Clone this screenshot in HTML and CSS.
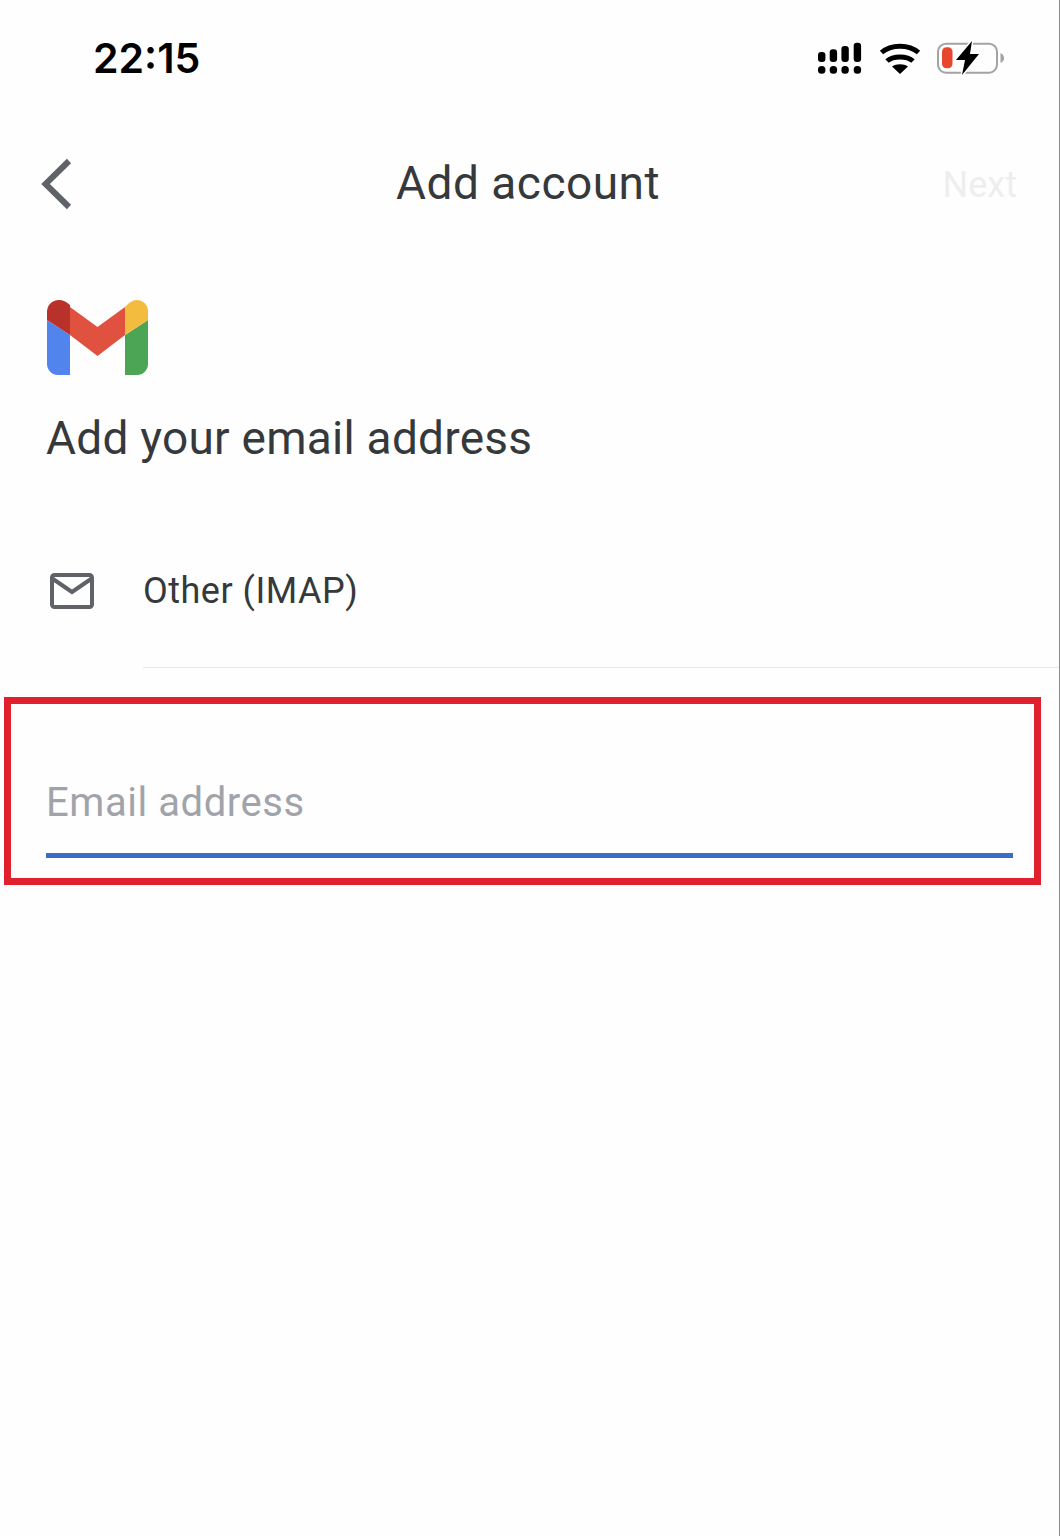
FILE: index.html
```html
<!DOCTYPE html>
<html>
<head>
    <meta name="viewport" content="width=device-width, initial-scale=1.0">
    <title>Add account</title>
    <link rel="stylesheet" href="styles.css">
</head>
<body>
    <div class="screen">
        <div class="status">
            <span class="time">22:15</span>
            <div class="status-icons">
                <svg class="signal" width="45" height="32" viewBox="0 0 45 32">
                    <rect x="0" y="10" width="7.4" height="10" rx="3.2"/>
                    <rect x="11.7" y="7.3" width="7.4" height="12.7" rx="3.2"/>
                    <rect x="23.4" y="4" width="7.4" height="16" rx="3.2"/>
                    <rect x="35.7" y="0.7" width="7.4" height="19.3" rx="3.2"/>
                    <rect x="0" y="24" width="7.4" height="7.7" rx="3.5"/>
                    <rect x="11.7" y="24" width="7.4" height="7.7" rx="3.5"/>
                    <rect x="23.4" y="24" width="7.4" height="7.7" rx="3.5"/>
                    <rect x="35.7" y="24" width="7.4" height="7.7" rx="3.5"/>
                </svg>
                <svg class="wifi" width="42" height="32" viewBox="0 0 42 32">
                    <path d="M2.5 10.5C12 2 30 2 39.5 10.500" fill="none" stroke="#000" stroke-width="5"/>
                    <path d="M8 19C14 13.500 28 13.500 34 19" fill="none" stroke="#000" stroke-width="5"/>
                    <path d="M13 24.500C17 21.500 25 21.500 29 24.500L21 32z"/>
                </svg>
                <svg class="battery" width="68" height="36" viewBox="0 0 68 36">
                    <rect x="1" y="3.700" width="59" height="29" rx="8" fill="none" stroke="#a3a3a3" stroke-width="2"/>
                    <rect x="5" y="7.300" width="10.500" height="21" rx="4.500" fill="#e8452f"/>
                    <path d="M63.500 13c2.500 1 3.500 3 3.500 5s-1 4-3.500 5z" fill="#a3a3a3"/>
                    <path d="M35 1 19 20h9L25 35 42 14h-9z" stroke="#fff" stroke-width="3" paint-order="stroke"/>
                </svg>
            </div>
        </div>

        <div class="topbar">
            <svg class="back" width="34" height="54" viewBox="0 0 34 54">
                <path d="M30 4 6.500 27 30 50" fill="none" stroke="#5f6368" stroke-width="6"/>
            </svg>
            <h1>Add account</h1>
            <span class="next">Next</span>
        </div>

        <svg class="logo" width="101" height="76" viewBox="0 0 101 76">
            <path d="M0 20V64a11 11 0 0 0 11 11H23V35z" fill="#5284ee"/>
            <path d="M78 35V75H90a11 11 0 0 0 11-11V20z" fill="#4ca455"/>
            <path d="M23 7 50.500 27 78 7V35L50.500 56 23 35z" fill="#e0513f"/>
            <path d="M0 20V12C0 5 5 0 12 0c4 0 7 1.500 11 5V35z" fill="#b8312a"/>
            <path d="M78 7C82 3 85 0 90 0c6 0 11 5 11 11V20L78 35z" fill="#f3bc3e"/>
        </svg>
        <h2>Add your email address</h2>

        <div class="option">
            <svg class="mail" width="44" height="36" viewBox="0 0 44 36">
                <rect x="2" y="2" width="40" height="32" rx="2.500" fill="none" stroke="#5f6368" stroke-width="4"/>
                <path d="M3 6 22 19 41 6" fill="none" stroke="#5f6368" stroke-width="4"/>
            </svg>
            <span>Other (IMAP)</span>
        </div>
        <div class="divider"></div>

        <div class="highlight">
            <div class="email-field">Email address</div>
        </div>
    </div>
</body>
</html>
```

FILE: styles.css
```css
body { margin: 0; background: #fff; font-family: Roboto, "Open Sans", sans-serif; }
h1, h2 { margin: 0; font-weight: 400; }
.screen { width: 1060px; height: 1536px; box-sizing: border-box; overflow: hidden; background: #fefefe; border-right: 1px solid #8a8a8a; }

.status { display: flex; justify-content: space-between; align-items: center; height: 115px; padding: 0 54px 0 93px; }
.time { font-family: Inter, sans-serif; font-size: 41px; font-weight: 600; color: #000; }
.status-icons { display: flex; align-items: center; gap: 16px; }

.topbar { display: grid; grid-template-columns: 1fr auto 1fr; align-items: center; height: 136px; padding: 0 42px 0 39px; }
.topbar h1 { font-size: 46px; letter-spacing: 0.5px; color: #36393c; }
.back { display: block; margin-top: 2px; }
.next { justify-self: end; margin-top: 3px; font-size: 36px; color: #eeeeee; }

.logo { display: block; margin: 49px 0 0 47px; }
h2 { margin: 32px 0 0 46px; font-size: 46px; line-height: 60px; letter-spacing: 0.25px; color: #36393c; }

.option { display: flex; align-items: center; gap: 49px; height: 46px; margin-top: 100px; padding-left: 50px; font-size: 36px; letter-spacing: 0.5px; color: #36393c; }
.divider { height: 1px; margin: 53px 0 0 143px; background: #e6e6e6; }

.highlight { box-sizing: border-box; width: 1037px; height: 188px; margin: 29px 0 0 4px; padding: 73px 21px 0 35px; border: 7px solid #e0202c; }
.email-field { height: 76px; line-height: 52px; border-bottom: 5px solid #3b6dc4; font-size: 40px; letter-spacing: 0.55px; color: #a0a4aa; }
```
